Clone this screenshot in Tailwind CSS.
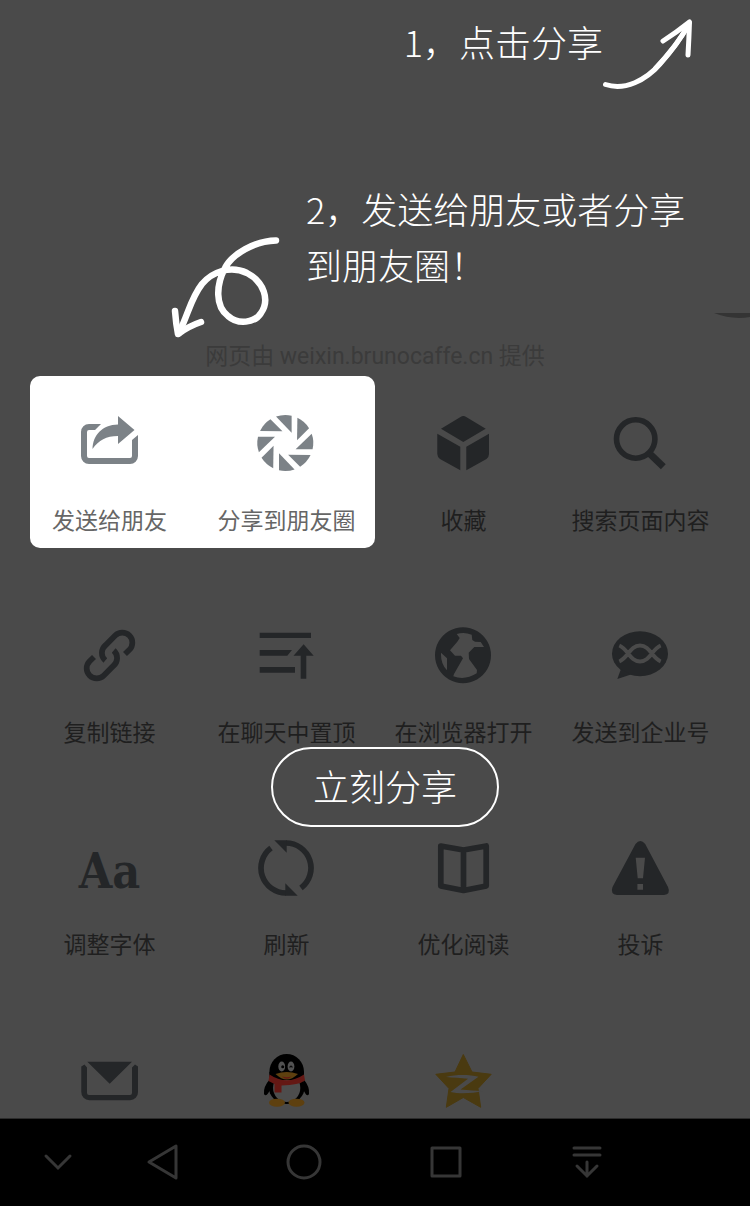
<!DOCTYPE html>
<html lang="zh-CN">
<head>
<meta charset="utf-8">
<meta name="viewport" content="width=device-width, initial-scale=1">
<title>立刻分享</title>
<script src="https://cdn.jsdelivr.net/npm/@tailwindcss/browser@4"></script>
</head>
<body class="bg-[#4a4a4a] font-[Roboto,'Noto_Sans_CJK_SC',sans-serif]">
<div class="relative flex min-h-screen flex-col overflow-hidden">

  <!-- Share instructions -->
  <header class="text-4xl font-light text-white font-['Noto_Sans_CJK_SC',sans-serif]">
    <div class="flex items-start justify-end pt-[17px] pr-[55px]">
      <p class="leading-[48px]">1，点击分享</p>
      <svg class="h-[75px] w-[92px]" viewBox="603 17 92 75" fill="none" stroke="currentColor" stroke-linecap="round" stroke-linejoin="round" aria-hidden="true">
        <path stroke-width="5" d="M605.500 84.500C625 91 646 80 660 64C671 52 681 39 689 23"/>
        <path stroke-width="5" d="M655 69C668 55 680 40 688 26"/>
        <path stroke-width="5" d="M663 41Q677 32 689.500 22Q689 38 688 55"/>
      </svg>
    </div>
    <div class="mt-[88px] flex items-start gap-6 pl-[170px]">
      <svg class="mt-[55px] h-[106px] w-[112px] shrink-0" viewBox="170 235 112 106" fill="none" stroke="currentColor" stroke-width="6.500" stroke-linecap="round" stroke-linejoin="round" aria-hidden="true">
        <path d="M276 240.500C255 241 232 254 225 268C216 285 215 306 228 316C238 325 255 323 261 313C270 300 264 282 247 273C230 265 212 272 202 284C191 298 189 312 179 333"/>
        <path d="M175 311Q176 324 178 334Q189 326 201 322"/>
      </svg>
      <p class="leading-[56px]">2，发送给朋友或者分享<br>到朋友圈！</p>
    </div>
  </header>

  <svg class="absolute right-0 top-[313px] h-[6px] w-9" viewBox="0 0 36 6" aria-hidden="true"><path fill="#343434" d="M0 0H36V4Q18 7 0 0z"/></svg>

  <main>
    <p class="mt-1 text-center text-[23px] leading-6 text-[#3b3b3b]">网页由 weixin.brunocaffe.cn 提供</p>

    <div class="mt-[7px] grid grid-cols-4 gap-y-10 px-[21px] text-[23px] leading-6 text-[#1f1f1f]">
      <div class="col-span-2 ml-[9px] rounded-[10px] bg-white text-[#666]">
        <div class="-ml-[9px] grid grid-cols-2">
          <button type="button" class="flex flex-col items-center gap-[35px] whitespace-nowrap pt-[35px] pb-[14px]">
            <svg class="h-16 w-[65px]" viewBox="0 0 65 64" fill="#7c8287" aria-hidden="true"><path d="M24 13H12a8 8 0 0 0-8 8V45a8 8 0 0 0 8 8H53a8 8 0 0 0 8-8V24l-6 5V45a2 2 0 0 1-2 2H12a2 2 0 0 1-2-2V21a2 2 0 0 1 2-2h6z"/><path d="M41 5L57.500 19 41 33V25C29 25 22 29 15.500 38 16 24 25 14 41 13.500z"/></svg>
            发送给朋友
          </button>
          <button type="button" class="flex flex-col items-center gap-[35px] whitespace-nowrap pt-[35px] pb-[14px]">
            <svg class="h-16 w-[65px]" viewBox="-31.300 -32 65 64" fill="#7c8287" aria-hidden="true"><defs><path id="blade" d="M6.300-10.300V-27.300A28 28 0 0 0-9.300-26.400z"/></defs><use href="#blade"/><use href="#blade" transform="rotate(45)"/><use href="#blade" transform="rotate(90)"/><use href="#blade" transform="rotate(135)"/><use href="#blade" transform="rotate(180)"/><use href="#blade" transform="rotate(225)"/><use href="#blade" transform="rotate(270)"/><use href="#blade" transform="rotate(315)"/></svg>
            分享到朋友圈
          </button>
        </div>
      </div>
      <button type="button" class="flex flex-col items-center gap-[35px] whitespace-nowrap pt-[35px] pb-[14px]">
        <svg class="h-16 w-[65px]" viewBox="0 0 65 64" fill="#242628" aria-hidden="true"><path d="M10 17.700L29.500 6Q32.300 4 35.200 6L54.700 17.700 32.300 31zM6.300 22.700L29.300 35.700V59.300L9 48Q6.300 46 6.300 43zM58 22.700L35.300 35.700V59.300L55.500 48Q58 46 58 43z"/></svg>
        收藏
      </button>
      <button type="button" class="flex flex-col items-center gap-[35px] whitespace-nowrap pt-[35px] pb-[14px]">
        <svg class="h-16 w-[65px]" viewBox="0 0 65 64" fill="none" stroke="#242628" aria-hidden="true"><circle cx="27.700" cy="28" r="19.200" stroke-width="5.600"/><path stroke-width="7" d="M41 42L55.300 55.700"/></svg>
        搜索页面内容
      </button>

      <button type="button" class="flex flex-col items-center gap-[35px] whitespace-nowrap pt-[35px] pb-[14px]">
        <svg class="h-16 w-[65px]" viewBox="0 0 65 64" fill="none" stroke="#242628" stroke-width="5.700" aria-hidden="true"><path d="M48 31L52.400 26.800A10 10 0 0 0 38.200 12.600L28.500 22.300A10 10 0 0 0 28.300 37.500M17 34L12.600 38.200A10 10 0 0 0 26.800 52.400L36.500 42.700A10 10 0 0 0 36.700 27.500"/></svg>
        复制链接
      </button>
      <button type="button" class="flex flex-col items-center gap-[35px] whitespace-nowrap pt-[35px] pb-[14px]">
        <svg class="h-16 w-[65px]" viewBox="0 0 65 64" fill="#242628" aria-hidden="true"><path d="M5.700 9.700H57V15H5.700zM5.700 27H38L33.300 32.700H5.700zM5.700 44H41V49.700H5.700zM49.600 21.300L59.700 32.700H52.300V55.700H46.700V32.700H39.500z"/></svg>
        在聊天中置顶
      </button>
      <button type="button" class="flex flex-col items-center gap-[35px] whitespace-nowrap pt-[35px] pb-[14px]">
        <svg class="h-16 w-[65px]" viewBox="0 0 65 64" fill="#242628" fill-rule="evenodd" aria-hidden="true"><path d="M32 4.300a28 28 0 1 0 .01 0zM25.700 11Q33 8.500 40.700 11.700L41.300 17 44 18.700 49.700 19 53 24H43.300L37.700 29.700 38 36 46 47 45.700 50.300Q34 57.700 22.300 53.300L23 51 32 35.300 30 32.700H24L19 27.300 26.300 18.700 28.700 15zM10 29.700L16 35.300V47.300Q9.500 41 10 29.700z"/></svg>
        在浏览器打开
      </button>
      <button type="button" class="flex flex-col items-center gap-[35px] whitespace-nowrap pt-[35px] pb-[14px]">
        <svg class="h-16 w-[65px]" viewBox="0 0 65 64" aria-hidden="true"><ellipse cx="32" cy="30.700" rx="28" ry="22.500" fill="#242628"/><path fill="#242628" d="M13 46L9.300 56 23 51.500z"/><path fill="none" stroke="#4a4a4a" stroke-width="4" d="M11.300 22.500C20 26 22 38.500 32 38.500S44 26 52.700 22.500M11.300 38.500C20 35 22 22.500 32 22.500S44 35 52.700 38.500"/></svg>
        发送到企业号
      </button>

      <button type="button" class="flex flex-col items-center gap-[35px] whitespace-nowrap pt-[35px] pb-[14px]">
        <span class="flex h-16 items-center pt-2 font-['DejaVu_Serif_Condensed','DejaVu_Serif',serif] text-5xl font-bold text-[#242628]" aria-hidden="true">Aa</span>
        调整字体
      </button>
      <button type="button" class="flex flex-col items-center gap-[35px] whitespace-nowrap pt-[35px] pb-[14px]">
        <svg class="h-16 w-[65px]" viewBox="0 0 65 64" aria-hidden="true"><defs><g id="turn"><path fill="none" stroke="#242628" stroke-width="5.700" d="M17 13A25 25 0 0 0 32 58"/><path fill="#242628" d="M31.300 48.300L43.700 60.800H31.300z"/></g></defs><use href="#turn"/><use href="#turn" transform="rotate(180 32 33)"/></svg>
        刷新
      </button>
      <button type="button" class="flex flex-col items-center gap-[35px] whitespace-nowrap pt-[35px] pb-[14px]">
        <svg class="h-16 w-[65px]" viewBox="0 0 65 64" fill="none" stroke="#242628" stroke-width="5.700" stroke-linejoin="round" aria-hidden="true"><path d="M9.800 11L32.500 15 55.200 11V51L32.500 55.500 9.800 51zM32.500 15V55"/></svg>
        优化阅读
      </button>
      <button type="button" class="flex flex-col items-center gap-[35px] whitespace-nowrap pt-[35px] pb-[14px]">
        <svg class="h-16 w-[65px]" viewBox="0 0 65 64" fill="#242628" fill-rule="evenodd" aria-hidden="true"><path d="M27.500 9Q32.300 3 37.200 9L60 52Q63 59 56 60H9Q2 59 4.500 52zM27.700 22.700L29.700 43.300H35L37 22.700zM29.400 49V54.700H35V49z"/></svg>
        投诉
      </button>

      <button type="button" class="flex flex-col items-center pt-[35px] pb-[7px]" aria-label="邮件">
        <svg class="h-16 w-[65px]" viewBox="0 0 65 64" fill="#242628" aria-hidden="true"><path d="M10.300 14.700H55L32.700 36.700zM7.500 17.500L10 20.500V46a2 2 0 0 0 2 2H53a2 2 0 0 0 2-2V20.500L58 17.500 61 19.500V45a8 8 0 0 1-8 8.300H12.300a8 8 0 0 1-8-8.300V19.500z"/></svg>
      </button>
      <button type="button" class="flex flex-col items-center pt-[35px] pb-[7px]" aria-label="QQ">
        <svg class="h-16 w-[65px]" viewBox="0 0 65 64" aria-hidden="true">
          <path d="M16 32Q9 40 10 47Q12 51 16 43zM49.500 32Q56 40 55 47Q53 51 49.500 43z"/>
          <ellipse cx="32.700" cy="40" rx="18" ry="17"/><ellipse cx="32.700" cy="24.700" rx="17.300" ry="17.700"/>
          <ellipse cx="32.700" cy="41" rx="13.600" ry="14" fill="#4d4d4d"/>
          <ellipse cx="23" cy="55.700" rx="8" ry="4" fill="#5e400f"/><ellipse cx="42.500" cy="55.700" rx="8" ry="4" fill="#5e400f"/>
          <path fill="#000" d="M15.400 25H50V33H15.400z"/>
          <path fill="#641814" d="M15.500 27.500Q32.700 39 50 27.500L51 33.500Q45 38 27.500 38.500V45.500H20.500V37L14.500 34z"/>
          <ellipse cx="27.700" cy="19.500" rx="3.400" ry="5" fill="#525252"/><ellipse cx="37" cy="19.500" rx="3.400" ry="5" fill="#525252"/>
          <circle cx="28.700" cy="19.700" r="1.500"/><path d="M35.700 20.500Q37 17.500 38.300 20.500" fill="none" stroke="#000" stroke-width="1.200"/>
          <path fill="#5e400f" d="M21.500 27Q32.700 23 44 27Q38 32.500 32.700 32.500T21.500 27z"/><path fill="#641814" d="M28 29.500Q32.700 31 37.500 29.500Q32.700 34 28 29.500z"/>
        </svg>
      </button>
      <button type="button" class="flex flex-col items-center pt-[35px] pb-[7px]" aria-label="QQ空间">
        <svg class="h-16 w-[65px]" viewBox="0 0 65 64" aria-hidden="true"><path fill="#4a3a10" stroke="#4a3a10" stroke-linejoin="round" d="M32.300 7.500L41 25 60.200 27.300 47 41.500 49.700 60.300 32.300 50.500 15.300 60.300 18 41.500 4.800 27.300 24 25z"/><path fill="#4a4a4a" d="M15 30C25 27.500 38 27.500 47.500 29.700L29.500 42.500C38 43.500 45 43.500 51.500 44C42 46.500 28 47 19.500 45L37 31.700C30 31 22 30.500 15 30z"/></svg>
      </button>
    </div>
  </main>

  <button type="button" class="absolute left-[271px] top-[747px] h-20 whitespace-nowrap rounded-full border-2 border-white px-10 pb-1 text-4xl font-light text-white font-['Noto_Sans_CJK_SC',sans-serif]">立刻分享</button>

  <!-- System navigation -->
  <nav class="flex flex-1 items-center border-t border-[#2c2c2c] bg-black pl-[38px] text-[#363636]">
    <button type="button" class="flex w-10 justify-center" aria-label="收起"><svg class="size-10" viewBox="0 0 40 40" fill="none" stroke="currentColor" stroke-width="3" stroke-linecap="round" aria-hidden="true"><path d="M8 13L20 25 32 13"/></svg></button>
    <button type="button" class="ml-[14px] flex w-[141px] justify-center" aria-label="返回"><svg class="size-10" viewBox="0 0 40 40" fill="none" stroke="currentColor" stroke-width="3" stroke-linejoin="round" aria-hidden="true"><path d="M33 3V35L6 19z"/></svg></button>
    <button type="button" class="flex w-[141px] justify-center" aria-label="主屏幕"><svg class="size-10" viewBox="0 0 40 40" fill="none" stroke="currentColor" stroke-width="3" aria-hidden="true"><circle cx="20" cy="19" r="16"/></svg></button>
    <button type="button" class="flex w-[141px] justify-center" aria-label="最近任务"><svg class="size-10" viewBox="0 0 40 40" fill="none" stroke="currentColor" stroke-width="3" stroke-linejoin="round" aria-hidden="true"><path d="M7 5H35V33H7z"/></svg></button>
    <button type="button" class="flex w-[141px] justify-center" aria-label="通知栏"><svg class="size-10" viewBox="0 0 40 40" fill="none" stroke="currentColor" stroke-width="3" stroke-linecap="round" aria-hidden="true"><path d="M8 5H34M8 12H34M21 19V33M11 23L21 33 31 23"/></svg></button>
  </nav>
</div>
</body>
</html>
